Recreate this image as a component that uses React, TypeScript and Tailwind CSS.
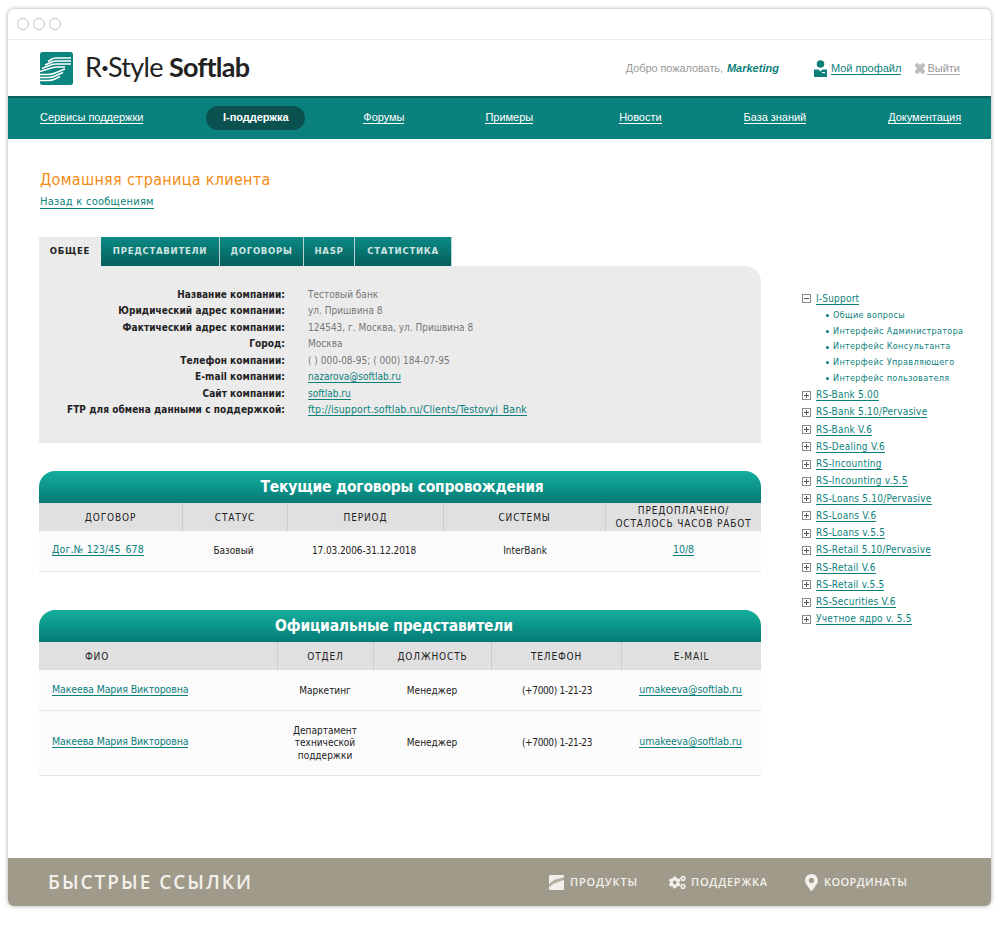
import { FaCogs, FaMapMarkerAlt } from 'react-icons/fa';

const companyRows = [
  { label: 'Название компании:', value: 'Тестовый банк' },
  { label: 'Юридический адрес компании:', value: 'ул. Пришвина 8' },
  { label: 'Фактический адрес компании:', value: '124543, г. Москва, ул. Пришвина 8' },
  { label: 'Город:', value: 'Москва' },
  { label: 'Телефон компании:', value: '( ) 000-08-95; ( 000) 184-07-95' },
  { label: 'E-mail компании:', value: 'nazarova@softlab.ru', link: 'text-[10px]' },
  { label: 'Сайт компании:', value: 'softlab.ru', link: 'text-[10px]' },
  { label: 'FTP для обмена данными с поддержкой:', value: 'ftp://isupport.softlab.ru/Clients/Testovyi_Bank', link: 'text-[10.5px] tracking-[0.1px]' },
];

const tabs = [
  { name: 'ПРЕДСТАВИТЕЛИ', cls: 'w-[119px]' },
  { name: 'ДОГОВОРЫ', cls: 'w-[84px]' },
  { name: 'HASP', cls: 'w-[51px]' },
  { name: 'СТАТИСТИКА', cls: 'w-[97px]' },
];

const subItems = ['Общие вопросы', 'Интерфейс Администратора', 'Интерфейс Консультанта', 'Интерфейс Управляющего', 'Интерфейс пользователя'];

const treeItems = [
  'RS-Bank 5.00',
  'RS-Bank 5.10/Pervasive',
  'RS-Bank V.6',
  'RS-Dealing V.6',
  'RS-Incounting',
  'RS-Incounting v.5.5',
  'RS-Loans 5.10/Pervasive',
  'RS-Loans V.6',
  'RS-Loans v.5.5',
  'RS-Retail 5.10/Pervasive',
  'RS-Retail V.6',
  'RS-Retail v.5.5',
  'RS-Securities V.6',
  'Учетное ядро v. 5.5',
];

function Logo() {
  return (
    <svg width="33" height="33" viewBox="0 0 33 33" className="shrink-0">
      <rect width="33" height="33" rx="2.5" fill="#0b8580" />
      <g fill="none" stroke="#fff" strokeWidth="1.5">
        <path d="M8 9.5 L13 6.5 Q14 6 16 6 L31 6" />
        <path d="M5 13 L13 9.5 Q14.5 9 16 9 L31 9" />
        <path d="M2 16.5 L12 12.5 Q14 12 16 12 L31 12" />
        <path d="M0 19.5 L13 15.5 Q14.5 15 17 15 L25 15" />
        <path d="M0 22.5 L8 22.5 Q12 22.5 15 21 L25 17" />
        <path d="M0 25.5 L8 25.5 Q12 25.5 15 24 L23 20.5" />
        <path d="M0 28.5 L8 28.5 Q12 28.5 15 27 L20 24.5" />
      </g>
    </svg>
  );
}

function ProfileIcon() {
  return (
    <svg width="13" height="17" viewBox="0 0 13 17" fill="#0c7f7b" className="shrink-0">
      <circle cx="6.5" cy="4" r="3.8" />
      <path d="M0 9.5 L4.5 9.5 L6.5 11.5 L8.5 9.5 L13 9.5 L13 17 L0 17 Z" />
      <rect x="8" y="12" width="3" height="1.2" fill="#fff" />
    </svg>
  );
}

function ExitIcon() {
  return (
    <svg width="10" height="11" viewBox="0 0 10 11" fill="#bdbdbd" className="shrink-0">
      <rect x="2" y="2" width="6" height="7" />
      <circle cx="2.4" cy="2.6" r="2.4" />
      <circle cx="7.6" cy="2.6" r="2.4" />
      <circle cx="2.4" cy="8.4" r="2.4" />
      <circle cx="7.6" cy="8.4" r="2.4" />
    </svg>
  );
}

function ProductsIcon() {
  return (
    <svg width="15" height="15" viewBox="0 0 15 15" className="shrink-0">
      <rect width="15" height="15" rx="1" fill="#f1efe9" />
      <path d="M0 9 L5 5 Q7 4 9 4 L15 2 L15 5 L9 7 Q7 7.5 5 8.5 L0 12 Z" fill="#b3aea1" />
    </svg>
  );
}

function TreeBox({ open }: { open?: boolean }) {
  return (
    <span className="relative mr-[5px] h-[9px] w-[9px] shrink-0 border border-[#8a8a8a] bg-white">
      <span className="absolute left-[1px] top-[3px] h-px w-[5px] bg-[#555]" />
      {!open && <span className="absolute left-[3px] top-[1px] h-[5px] w-px bg-[#555]" />}
    </span>
  );
}

function TableTitle({ children, className = '' }: { children: string; className?: string }) {
  return (
    <div className={`flex h-[32px] items-center justify-center rounded-t-[16px] bg-gradient-to-b from-[#14b09d] to-[#057a77] pt-[2px] text-[15.5px] font-bold tracking-[-0.2px] text-white ${className}`}>
      {children}
    </div>
  );
}

function HeadCell({ children, last }: { children: React.ReactNode; last?: boolean }) {
  return (
    <div className={`flex h-[28px] items-center justify-center whitespace-nowrap text-center text-[10px] leading-[13px] tracking-[0.85px] text-[#222] ${last ? '' : 'border-r border-[#cccccc]'}`}>
      {children}
    </div>
  );
}

function TableLink({ children, className = '' }: { children: string; className?: string }) {
  return <a className={`relative top-[-1px] border-b border-[#0c7f7b] text-[10.5px] leading-[11px] text-[#0c7f7b] ${className}`}>{children}</a>;
}

export default function App() {
  return (
    <div className="h-[936px] w-[1000px] overflow-hidden bg-white px-[8px] pt-[9px] text-[10px] [font-family:'DejaVu_Sans',sans-serif]">
      <div className="flex h-[897px] w-[983px] flex-col overflow-hidden rounded-[6px] bg-white shadow-[0_0_4px_rgba(0,0,0,0.35)]">
        <div className="flex h-[31px] items-center gap-[4px] border-b border-[#ececec] pl-[9px]">
          <span className="h-[12px] w-[12px] rounded-full border border-[#c6c6c6]" />
          <span className="h-[12px] w-[12px] rounded-full border border-[#c6c6c6]" />
          <span className="h-[12px] w-[12px] rounded-full border border-[#c6c6c6]" />
        </div>

        <header className="flex h-[56px] items-center pl-[32px] pr-[31px]">
          <Logo />
          <div className="ml-[12px] mt-[-2px] whitespace-nowrap text-[27px] tracking-[-0.7px] text-[#222] [font-family:Lato,sans-serif]">
            R<span className="font-bold">·</span>Style <span className="font-bold">Softlab</span>
          </div>
          <div className="ml-auto flex items-center whitespace-nowrap text-[11px] text-[#9a9a9a] [font-family:'Liberation_Sans',sans-serif]">
            <span className="tracking-[-0.1px]">Добро пожаловать,</span>
            <b className="ml-[4px] italic text-[#0c7f7b]">Marketing</b>
            <span className="ml-[35px] mr-[4px]"><ProfileIcon /></span>
            <a className="border-b border-[#0c7f7b] leading-[12px] text-[#0c7f7b]">Мой профайл</a>
            <span className="ml-[14px] mr-[2px]"><ExitIcon /></span>
            <a className="border-b border-[#aaa] leading-[12px] text-[#9a9a9a]">Выйти</a>
          </div>
        </header>

        <nav className="flex h-[43px] items-center border-t-2 border-[#0a5f5d] bg-[#0a817d] pb-[2px] pl-[32px] text-[11px] tracking-[-0.03px] text-white [font-family:'Liberation_Sans',sans-serif]">
          <a className="border-b border-white leading-[12px]">Сервисы поддержки</a>
          <span className="ml-[63px] flex h-[24px] w-[99px] items-center justify-center rounded-full bg-[#0a514f] font-bold">I-поддержка</span>
          <a className="ml-[58px] border-b border-white leading-[12px]">Форумы</a>
          <a className="ml-[81px] border-b border-white leading-[12px]">Примеры</a>
          <a className="ml-[86px] border-b border-white leading-[12px]">Новости</a>
          <a className="ml-[82px] border-b border-white leading-[12px]">База знаний</a>
          <a className="ml-[82px] border-b border-white leading-[12px]">Документация</a>
        </nav>

        <main className="flex flex-1 [font-stretch:condensed]">
          <div className="ml-[31px] w-[722px]">
            <h1 className="mt-[32px] pl-[1px] text-[16px] leading-[18px] tracking-[0.3px] text-[#f58a14]">Домашняя страница клиента</h1>
            <a className="ml-[1px] mt-[7px] inline-block border-b border-[#0c7f7b] text-[11px] leading-[12px] tracking-[0.25px] text-[#0c7f7b]">Назад к сообщениям</a>

            <div className="mt-[28px] flex h-[29px] items-end">
              <div className="flex h-[29px] w-[62px] items-center justify-center bg-[#ebebeb] text-[9.5px] font-bold tracking-[0.7px] text-[#222]">ОБЩЕЕ</div>
              {tabs.map((tab) => (
                <div key={tab.name} className={`flex h-[29px] items-center justify-center border-r border-[#b9d4d2] bg-gradient-to-b from-[#0b8a84] to-[#055f5c] text-[9.5px] font-bold tracking-[0.7px] text-[#cfe5e3] ${tab.cls}`}>
                  {tab.name}
                </div>
              ))}
            </div>

            <section className="h-[177px] rounded-tr-[16px] bg-[#ebebeb] pt-[20px]">
              {companyRows.map((row) => (
                <div key={row.label} className="flex h-[16.5px] items-center">
                  <div className="w-[246px] whitespace-nowrap text-right font-bold tracking-[0.06px] text-[#222]">{row.label}</div>
                  <div className="ml-[23px] whitespace-nowrap text-[#777]">
                    {row.link ? <a className={`border-b border-[#0c7f7b] leading-[11px] text-[#0c7f7b] ${row.link}`}>{row.value}</a> : row.value}
                  </div>
                </div>
              ))}
            </section>

            <section className="mt-[28px]">
              <TableTitle className="pl-[4px]">Текущие договоры сопровождения</TableTitle>
              <div className="grid grid-cols-[144px_105px_156px_162px_155px] bg-[#e0e0e0]">
                <HeadCell>ДОГОВОР</HeadCell>
                <HeadCell>СТАТУС</HeadCell>
                <HeadCell>ПЕРИОД</HeadCell>
                <HeadCell>СИСТЕМЫ</HeadCell>
                <HeadCell last>ПРЕДОПЛАЧЕНО/<br />ОСТАЛОСЬ ЧАСОВ РАБОТ</HeadCell>
              </div>
              <div className="grid h-[41px] grid-cols-[144px_105px_156px_162px_155px] items-center border-b border-[#e6e6e6] bg-[#fbfbfb] pb-[2px] text-center text-[#222]">
                <div className="pl-[13px] text-left"><TableLink className="tracking-[0.12px]">Дог.№ 123/45_678</TableLink></div>
                <div className="pr-[4px]">Базовый</div>
                <div className="pr-[4px] tracking-[-0.1px]">17.03.2006-31.12.2018</div>
                <div>InterBank</div>
                <div><TableLink>10/8</TableLink></div>
              </div>
            </section>

            <section className="mt-[38px]">
              <TableTitle className="pr-[12px]">Официальные представители</TableTitle>
              <div className="grid grid-cols-[239px_96px_118px_130px_139px] bg-[#e0e0e0]">
                <div className="flex h-[28px] items-center border-r border-[#cccccc] pl-[46px] tracking-[0.85px] text-[#222]">ФИО</div>
                <HeadCell>ОТДЕЛ</HeadCell>
                <HeadCell>ДОЛЖНОСТЬ</HeadCell>
                <HeadCell>ТЕЛЕФОН</HeadCell>
                <HeadCell last>E-MAIL</HeadCell>
              </div>
              <div className="grid h-[41px] grid-cols-[239px_96px_118px_130px_139px] items-center border-b border-[#e6e6e6] bg-[#fbfbfb] text-center text-[#222]">
                <div className="pl-[13px] text-left"><TableLink className="tracking-[-0.12px]">Макеева Мария Викторовна</TableLink></div>
                <div className="pr-[2px]">Маркетинг</div>
                <div className="pr-[2px]">Менеджер</div>
                <div className="tracking-[-0.35px]">(+7000) 1-21-23</div>
                <div className="pr-[2px]"><TableLink className="tracking-[-0.05px]">umakeeva@softlab.ru</TableLink></div>
              </div>
              <div className="grid h-[65px] grid-cols-[239px_96px_118px_130px_139px] items-center border-b border-[#e6e6e6] bg-[#fbfbfb] pb-[2px] text-center text-[#222]">
                <div className="pl-[13px] text-left"><TableLink className="tracking-[-0.12px]">Макеева Мария Викторовна</TableLink></div>
                <div className="mt-[3px] px-[9px] pr-[11px] leading-[12.5px]">Департамент технической поддержки</div>
                <div className="pr-[2px]">Менеджер</div>
                <div className="tracking-[-0.35px]">(+7000) 1-21-23</div>
                <div className="pr-[2px]"><TableLink className="tracking-[-0.05px]">umakeeva@softlab.ru</TableLink></div>
              </div>
            </section>
          </div>

          <aside className="ml-[41px] mt-[151px] text-[#0c7f7b]">
            <div className="flex h-[17px] items-center">
              <TreeBox open />
              <a className="border-b border-[#0c7f7b] leading-[11px] tracking-[0.2px]">I-Support</a>
            </div>
            <ul className="mt-[1px]">
              {subItems.map((item) => (
                <li key={item} className="flex h-[15.7px] items-center whitespace-nowrap pl-[24px] text-[9px] tracking-[0.33px]">
                  <span className="mr-[4px] h-[3px] w-[3px] rounded-full bg-[#0c7f7b]" />
                  {item}
                </li>
              ))}
            </ul>
            <ul>
              {treeItems.map((item) => (
                <li key={item} className="flex h-[17.25px] items-center whitespace-nowrap">
                  <TreeBox />
                  <a className="border-b border-[#0c7f7b] leading-[11px] tracking-[0.22px]">{item}</a>
                </li>
              ))}
            </ul>
          </aside>
        </main>

        <footer className="flex h-[48px] items-center bg-[#a09a8b] pl-[40px] font-semibold text-[#f3f1ec] [font-family:'Open_Sans',sans-serif]">
          <div className="w-[501px] text-[19px] tracking-[2px]">БЫСТРЫЕ ССЫЛКИ</div>
          <div className="flex w-[120px] items-center text-[11px] tracking-[0.8px]">
            <ProductsIcon />
            <span className="ml-[6px]">ПРОДУКТЫ</span>
          </div>
          <div className="flex w-[134px] items-center text-[11px] tracking-[0.8px]">
            <FaCogs className="text-[17px]" />
            <span className="ml-[5px]">ПОДДЕРЖКА</span>
          </div>
          <div className="flex items-center text-[11px] tracking-[0.4px]">
            <FaMapMarkerAlt className="text-[17px]" />
            <span className="ml-[4px]">КООРДИНАТЫ</span>
          </div>
        </footer>
      </div>
    </div>
  );
}
